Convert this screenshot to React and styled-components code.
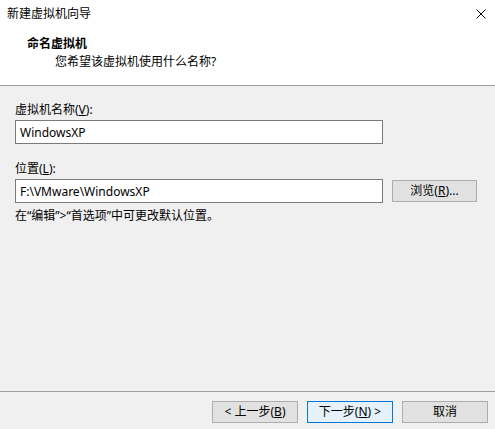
import styled, { createGlobalStyle } from 'styled-components';

const GlobalStyle = createGlobalStyle`
  html, body {
    margin: 0;
    padding: 0;
    background: #f0f0f0;
  }
  body {
    font-family: 'Noto Sans', 'Noto Sans CJK SC', sans-serif;
    font-size: 12px;
    color: #000;
  }
`;

const Window = styled.div`
  width: 495px;
  height: 429px;
  display: flex;
  flex-direction: column;
  background: #f0f0f0;
  overflow: hidden;
`;

const TitleBar = styled.div`
  height: 30px;
  display: flex;
  align-items: center;
  justify-content: space-between;
  padding: 0 9px 2px 7px;
  box-sizing: border-box;
  background: #fff;
`;

const TitleText = styled.div`
  font-size: 12px;
  line-height: 16px;
`;

const Header = styled.div`
  background: #fff;
  padding: 5px 0 14px 27px;
  border-bottom: 1px solid #a0a0a0;
`;

const HeaderTitle = styled.div`
  font-weight: 700;
  line-height: 18px;
`;

const HeaderSub = styled.div`
  line-height: 18px;
  padding-left: 28px;
`;

const Body = styled.div`
  flex: 1;
  padding: 16px 15px 0 15px;
  display: flex;
  flex-direction: column;
`;

const FieldLabel = styled.div`
  line-height: 16px;
  margin-top: ${(p) => p.$top || 0}px;
  margin-bottom: 2px;
`;

const Row = styled.div`
  display: flex;
  align-items: center;
  gap: 9px;
`;

const TextBox = styled.div`
  width: 368px;
  height: 24px;
  box-sizing: border-box;
  border: 1px solid #7a7a7a;
  background: #fff;
  display: flex;
  align-items: center;
  padding-left: 4px;
`;

const Hint = styled.div`
  line-height: 16px;
  margin-top: 5px;
`;

const Footer = styled.div`
  border-top: 1px solid #a0a0a0;
  height: 38px;
  box-sizing: border-box;
  display: flex;
  justify-content: flex-end;
  gap: 9px;
  padding: 9px 7px 0 0;
`;

const Button = styled.div`
  width: ${(p) => p.$w || 86}px;
  height: 22px;
  box-sizing: border-box;
  border: 1px solid ${(p) => (p.$primary ? '#0078d7' : '#adadad')};
  background: ${(p) => (p.$primary ? '#e5f1fb' : '#e1e1e1')};
  display: flex;
  align-items: center;
  justify-content: center;
  line-height: 16px;
`;

const Key = styled.span`
  text-decoration: underline;
`;

function CloseIcon() {
  return (
    <svg width="10" height="10" viewBox="0 0 10 10">
      <path d="M0.5 0.5 L9.5 9.5 M9.5 0.5 L0.5 9.5" stroke="#000" strokeWidth="1" fill="none" />
    </svg>
  );
}

export default function App() {
  return (
    <>
      <GlobalStyle />
      <Window>
        <TitleBar>
          <TitleText>新建虚拟机向导</TitleText>
          <CloseIcon />
        </TitleBar>
        <Header>
          <HeaderTitle>命名虚拟机</HeaderTitle>
          <HeaderSub>您希望该虚拟机使用什么名称?</HeaderSub>
        </Header>
        <Body>
          <FieldLabel>
            虚拟机名称(<Key>V</Key>):
          </FieldLabel>
          <Row>
            <TextBox>WindowsXP</TextBox>
          </Row>
          <FieldLabel $top={17}>
            位置(<Key>L</Key>):
          </FieldLabel>
          <Row>
            <TextBox>F:\VMware\WindowsXP</TextBox>
            <Button $w={85}>
              浏览(<Key>R</Key>)...
            </Button>
          </Row>
          <Hint>在“编辑”&gt;“首选项”中可更改默认位置。</Hint>
        </Body>
        <Footer>
          <Button>
            &lt; 上一步(<Key>B</Key>)
          </Button>
          <Button $primary>
            下一步(<Key>N</Key>) &gt;
          </Button>
          <Button>取消</Button>
        </Footer>
      </Window>
    </>
  );
}
